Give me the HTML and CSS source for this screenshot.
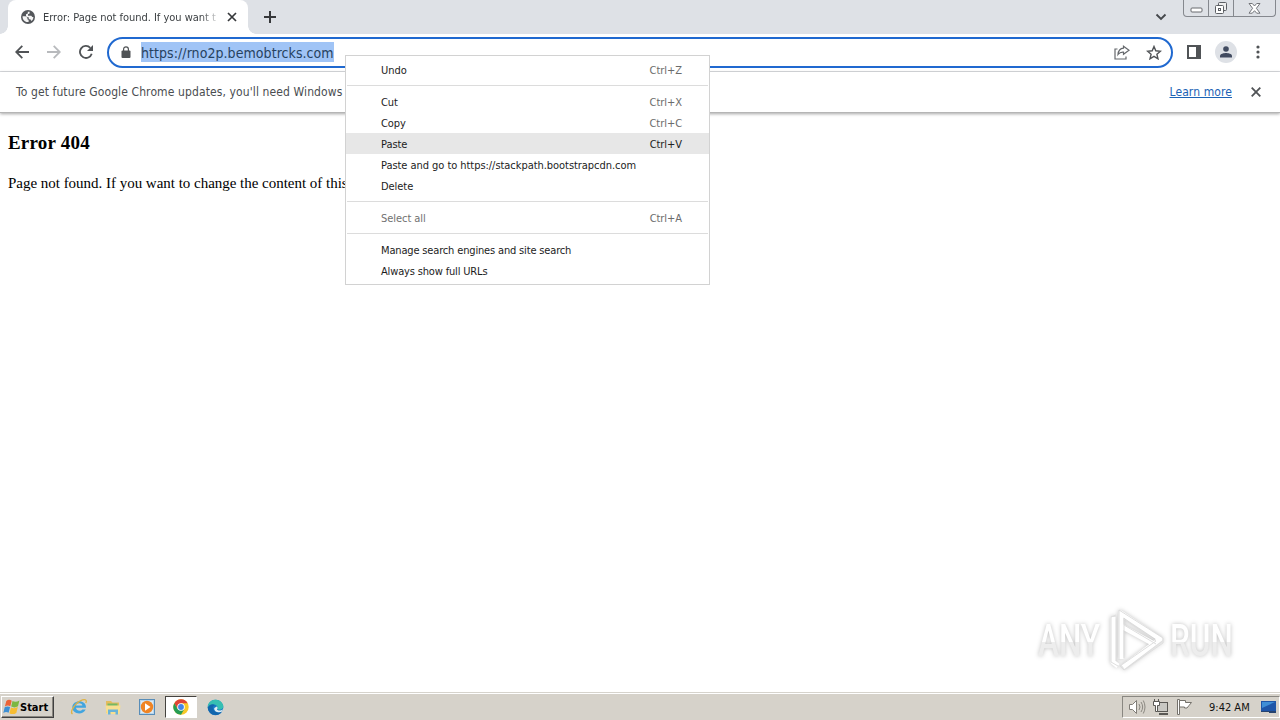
FILE: index.html
```
<!DOCTYPE html>
<html lang="en">
<head>
    <meta charset="UTF-8">
    <title>Error: Page not found. If you want to change the content of this page</title>
    <link rel="stylesheet" href="styles.css">
</head>
<body>
    <div class="desktop">
        <!-- tabs -->
        <div class="tabstrip">
            <div class="tab">
                <svg class="globe" width="14" height="14" viewBox="0 0 14 14"><circle cx="7" cy="7" r="7" fill="#54575b"/><path d="M1.600 6.200h3l1.800 1.600v1.500l1.200.8v1.800C4 12.600 1.400 9.700 1.600 6.200zM6.800 1.700h1.800v1.700L7 4.300v1.500h3.300l1 1.300h1.100c-.1 2-.8 3.100-2 4L9.300 9.200H7.800V7.600L5 6.500V4.300l1.800-.8z" fill="#f4f4f4"/></svg>
                <span class="tab-title">Error: Page not found. If you want t</span>
                <svg width="10" height="10" viewBox="0 0 10 10"><path d="M1 1l8 8M9 1L1 9" stroke="#36383b" stroke-width="1.700"/></svg>
            </div>
            <svg class="plus" width="12" height="12" viewBox="0 0 12 12"><path d="M6 0v12M0 6h12" stroke="#36383b" stroke-width="2"/></svg>
            <svg class="chevron" width="12" height="8" viewBox="0 0 12 8"><path d="M1.500 1.500L6 6l4.500-4.500" fill="none" stroke="#45484c" stroke-width="1.900"/></svg>
            <div class="win-btns">
                <span class="win-btn min"><svg width="13" height="6" viewBox="0 0 13 6"><rect x="1" y="1" width="11" height="4" rx="1" fill="#fff" stroke="#686a6f"/></svg></span>
                <span class="win-btn max"><svg width="14" height="13" viewBox="0 0 14 13"><rect x="4.500" y=".5" width="8" height="8" rx="1" fill="#eee" stroke="#5c5f64"/><rect x="1.500" y="3.500" width="8" height="8" rx="1" fill="#fff" stroke="#5c5f64"/><rect x="4.500" y="6.500" width="2" height="2" fill="none" stroke="#5c5f64"/></svg></span>
                <span class="win-btn close"><svg width="13" height="11" viewBox="0 0 13 11"><path d="M1 .5h3.300L6.500 3 8.700.5H12L8.400 5.300l3.600 4.900H8.700L6.500 7.700l-2.200 2.500H1l3.600-4.900z" fill="#fff" stroke="#73757a"/></svg></span>
            </div>
        </div>

        <!-- toolbar -->
        <div class="toolbar">
            <svg class="back" width="14" height="14" viewBox="0 0 14 14"><path d="M14 7H1.500M7.300.9L1.200 7l6.100 6.100" fill="none" stroke="#505356" stroke-width="1.800"/></svg>
            <svg class="forward" width="14" height="14" viewBox="0 0 14 14"><path d="M0 7h12.500M6.700.9L12.800 7l-6.100 6.100" fill="none" stroke="#b8babd" stroke-width="1.800"/></svg>
            <svg class="reload" width="14" height="14" viewBox="0 0 14 14"><path d="M12.700 8.700A6 6 0 1 1 11.300 2.800" fill="none" stroke="#505356" stroke-width="1.800"/><path d="M14 0v6H8z" fill="#505356"/></svg>
            <div class="omnibox">
                <svg class="lock" width="10" height="12" viewBox="0 0 10 12"><rect x=".5" y="4.500" width="9" height="7.500" rx="1" fill="#505356"/><path d="M2.600 5V3.200a2.400 2.400 0 0 1 4.800 0V5" fill="none" stroke="#505356" stroke-width="1.200"/></svg>
                <span class="url">https://rno2p.bemobtrcks.com</span>
                <svg class="share" width="16" height="15" viewBox="0 0 16 15"><path d="M3.500 4H1v10h11v-2.500" fill="none" stroke="#65686c" stroke-width="1.200"/><path d="M9.500 1.200L15 5.200 9.500 9.200V7.200C7 7 5.300 7.800 4 9.500c.3-3.600 2-6 5.500-6.300z" fill="none" stroke="#65686c" stroke-width="1.200"/></svg>
                <svg class="star" width="16" height="15" viewBox="0 0 16 15"><path d="M8 1.500l1.800 4.300 4.700.4-3.600 3.100 1.100 4.500L8 11.400l-4 2.400 1.100-4.500L1.500 6.200l4.700-.4z" fill="none" stroke="#505356" stroke-width="1.400"/></svg>
            </div>
            <svg class="panel" width="14" height="14" viewBox="0 0 14 14"><rect x="1" y="1" width="12" height="12" fill="#fff" stroke="#505356" stroke-width="2"/><path d="M9 1h4v12H9z" fill="#505356"/></svg>
            <span class="avatar"><svg width="14" height="14" viewBox="0 0 14 14"><circle cx="7" cy="4" r="2.800" fill="#414b60"/><path d="M1 12.500V11c0-2.200 4-3 6-3s6 .8 6 3v1.500z" fill="#414b60"/></svg></span>
            <svg class="dots" width="4" height="14" viewBox="0 0 4 14"><g fill="#505356"><circle cx="2" cy="2" r="1.600"/><circle cx="2" cy="7" r="1.600"/><circle cx="2" cy="12" r="1.600"/></g></svg>
        </div>

        <div class="infobar">
            <span class="info-text">To get future Google Chrome updates, you'll need Windows</span>
            <a href="#" class="learn">Learn more</a>
            <svg width="10" height="10" viewBox="0 0 10 10"><path d="M.7.7l8.600 8.600M9.300.7L.7 9.300" stroke="#505356" stroke-width="1.800"/></svg>
        </div>

        <div class="page">
            <h3>Error 404</h3>
            <p>Page not found. If you want to change the content of this</p>
        </div>

        <!-- taskbar -->
        <div class="taskbar">
            <div class="start">
                <svg width="17" height="16" viewBox="0 0 17 16"><path d="M3.300 2C5 .4 7 .5 8.700 1.700L7.300 7.300C5.500 6.200 3.700 6.400 1.900 7.500z" fill="#ec6336"/><path d="M9.500 2.100c2 1.100 4.300 1.100 6.900-.5L15 7.300c-2.400 1.500-4.700 1.400-6.800.3z" fill="#7cb742"/><path d="M1.700 8.300c1.800-1.100 3.500-1.200 5.400-.2l-1.500 5.700C3.900 12.700 2.200 12.800.3 13.900z" fill="#3d8fd3"/><path d="M8 8.500c2 1.100 4.300 1 6.800-.4l-1.500 5.800c-2.400 1.500-4.700 1.500-6.900.3z" fill="#f7bd32"/></svg>
                <b>Start</b>
            </div>
            <span class="app"><svg width="18" height="18" viewBox="0 0 18 18"><path d="M16 9.800H6c.2 3 4.800 4 6.400 1.600h3.300C12.800 17.800 2.300 16.300 2.300 9.300c0-8 14.200-8.600 13.700.5zM6 7.500h6.400C12 4.500 6.400 4.500 6 7.500z" fill="#42a5df"/><path d="M2.500 16C-.5 14 5 4.500 12.500 1.900c3.300-1.100 4.500.5 3.300 3.200" fill="none" stroke="#dfb243" stroke-width="1.300"/></svg></span>
            <span class="app"><svg width="18" height="18" viewBox="0 0 18 18"><path d="M2 3h5l1.500 1.500H15V15H2z" fill="#e4bc5d"/><path d="M3.500 5.500h10v3h-10z" fill="#75b865"/><path d="M1.500 7.500h15L15.500 16h-13z" fill="#f8df91"/><path d="M4 16.500v-5h10v5h-2.500V14h-5v2.500z" fill="#69b3d8"/></svg></span>
            <span class="app"><svg width="18" height="18" viewBox="0 0 18 18"><rect x="1.500" y="1.500" width="15" height="15" fill="#b7d5ec" stroke="#588db8"/><rect x="3" y="3" width="12" height="12" fill="#dcebf5"/><circle cx="9" cy="9" r="6.200" fill="#ef8424"/><path d="M7 5.300l5.500 3.700L7 12.700z" fill="#fff"/></svg></span>
            <span class="app active"><svg width="16" height="16" viewBox="0 0 16 16"><circle cx="8" cy="8" r="7.700" fill="#f7c828"/><path d="M1.330 4.150A7.700 7.700 0 0 1 14.670 4.150H8L4.670 9.930z" fill="#df4437"/><path d="M1.330 4.150A7.700 7.700 0 0 0 8 15.700L11.330 9.930H4.670z" fill="#259c54"/><circle cx="8" cy="8" r="3.800" fill="#fff"/><circle cx="8" cy="8" r="2.900" fill="#4285e8"/></svg></span>
            <span class="app"><svg width="17" height="17" viewBox="0 0 17 17"><circle cx="8.500" cy="8.500" r="7.800" fill="#1878c5"/><path d="M1 6.500C2.500-1.300 15-1 16.300 7c.4 3-3.300 4.700-6.300 3 1.500-1.500-.3-4.600-3.200-4.600C4 5.400 2 7 .8 9z" fill="#36bfb2"/><path d="M.8 8.500c1.500-3.200 5.200-4 7.300-2.300C5.500 6.600 5 9.400 6.800 11.500c2 2.300 5.600 2.400 8 1-2.800 5.600-13.700 4.500-14-4z" fill="#1266ad"/><path d="M9.800 7.500c2 2.100-.7 2.500.7 3.500 1.600 1 4 .6 5.500-.7l-1 2.300c-3.400 1.700-8.500-.1-7.700-3.700z" fill="#e2eff4"/></svg></span>

            <div class="tray">
                <svg width="18" height="18" viewBox="0 0 18 18"><path d="M1.500 6.500h3l4-4v13l-4-4h-3z" fill="#fff" stroke="#807d77"/><path d="M11 6q2 3 0 6M13 4q3.300 5 0 10M15.300 2.500q3.400 6.500 0 13" fill="none" stroke="#8b8881"/></svg>
                <svg width="18" height="18" viewBox="0 0 18 18"><rect x="5.500" y="4.500" width="10" height="9" fill="#c9c8c3" stroke="#5a5854"/><path d="M7 16h9" stroke="#5a5854" stroke-width="2"/><path d="M2.500 1v3M6.500 1v3M1.500 3.500h6v4h-2v6h-2v-6h-2z" fill="#fff" stroke="#5a5854"/></svg>
                <svg width="18" height="18" viewBox="0 0 18 18"><path d="M1.500 1.500h2v15h-2z" fill="#fff" stroke="#75726c"/><path d="M3.500 2.500h6v2h6L13 7.500l-2 2.500H8.500V9h-5z" fill="#fff" stroke="#75726c"/></svg>
                <span class="clock">9:42 AM</span>
                <svg class="desk" width="15" height="14" viewBox="0 0 15 14"><path d="M0 1h15v10H0z" fill="#1e55a8"/><path d="M1 2h13L1 8z" fill="#3f8ed6"/><path d="M0 11h15v2H8v-1H0z" fill="#26436e"/></svg>
            </div>
        </div>

        <div class="menu">
            <div class="item"><span>Undo</span><kbd>Ctrl+Z</kbd></div>
            <hr>
            <div class="item"><span>Cut</span><kbd>Ctrl+X</kbd></div>
            <div class="item"><span>Copy</span><kbd>Ctrl+C</kbd></div>
            <div class="item hover"><span>Paste</span><kbd>Ctrl+V</kbd></div>
            <div class="item"><span>Paste and go to https://stackpath.bootstrapcdn.com</span></div>
            <div class="item"><span>Delete</span></div>
            <hr>
            <div class="item disabled"><span>Select all</span><kbd>Ctrl+A</kbd></div>
            <hr>
            <div class="item tight"><span>Manage search engines and site search</span></div>
            <div class="item tight"><span>Always show full URLs</span></div>
        </div>

        <div class="watermark">
            <span>ANY</span>
            <svg width="60" height="66" viewBox="0 0 60 66"><g fill="none" stroke="#fff" stroke-width="5" stroke-linejoin="round"><path d="M7 10v45l5 4M15 52V6l39 26-37 28"/><path d="M15 19l33 18"/></g><g fill="none" stroke="#dedede" stroke-width="1" stroke-linejoin="round"><path d="M10 8l-5 2v45l7 4M13 53V3l44 28v5L18 63l-4-4 36-25-32-22v39"/><path d="M18 18l32 19"/></g></svg>
            <span>RUN</span>
        </div>
    </div>
</body>
</html>
```
FILE: styles.css
```
*{
    box-sizing: border-box;
    margin: 0;
    padding: 0;
}
body{
    overflow: hidden;
    background: #fff;
    font-family: "DejaVu Sans Condensed", "DejaVu Sans", sans-serif;
    font-size: 11px;
    color: #222;
}
svg{
    display: block;
    flex: none;
}
.desktop{
    position: relative;
    display: flex;
    flex-direction: column;
    width: 1280px;
    height: 720px;
    overflow: hidden;
}

/* tabs */
.tabstrip{
    display: flex;
    height: 34px;
    padding-left: 8px;
    background: #dee1e6;
}
.tab{
    position: relative;
    display: flex;
    align-items: center;
    width: 240px;
    padding-left: 13px;
    background: #fff;
    border-radius: 8px 8px 0 0;
}
.tab::before,.tab::after{
    content: "";
    position: absolute;
    bottom: 0;
    width: 8px;
    height: 8px;
}
.tab::before{
    left: -8px;
    background: radial-gradient(circle at 0 0, #dee1e6 7.5px, #fff 8px);
}
.tab::after{
    right: -8px;
    background: radial-gradient(circle at 100% 0, #dee1e6 7.5px, #fff 8px);
}
.tab-title{
    width: 176px;
    margin: 0 8px 0 8px;
    white-space: nowrap;
    letter-spacing: -.02px;
    color: #3c4043;
    -webkit-mask-image: linear-gradient(90deg, #000 158px, transparent 178px);
    mask-image: linear-gradient(90deg, #000 158px, transparent 178px);
}
.plus{
    margin: 11px 0 0 16px;
}
.chevron{
    margin: 13px 16px 0 auto;
}
.win-btns{
    display: flex;
    width: 93px;
    height: 17px;
    margin-right: 4px;
    border: 1px solid #85888e;
    border-top: 0;
    border-radius: 0 0 4px 4px;
}
.win-btn{
    display: flex;
    justify-content: center;
    align-items: center;
    width: 25px;
    border-right: 1px solid #85888e;
}
.win-btn.min{
    padding-top: 4px;
}
.win-btn.close{
    flex: 1;
    border: 0;
}

/* toolbar */
.toolbar{
    display: flex;
    align-items: center;
    height: 38px;
    padding: 0 20px 1px 15px;
    border-bottom: 1px solid #dadce0;
}
.forward{
    margin-left: 18px;
}
.reload{
    margin: 0 14px 0 18px;
}
.omnibox{
    display: flex;
    align-items: center;
    width: 1066px;
    height: 31px;
    padding: 0 9px 0 12px;
    border: 2px solid #2069d0;
    border-radius: 16px;
}
.url{
    height: 20px;
    margin-left: 10px;
    line-height: 22px;
    font-size: 14px;
    letter-spacing: .06px;
    color: #27425f;
    background: #a0c4f6;
}
.share{
    margin: 0 16px 0 auto;
}
.panel{
    margin-left: 14px;
}
.avatar{
    display: flex;
    justify-content: center;
    align-items: center;
    width: 22px;
    height: 22px;
    margin-left: 14px;
    border-radius: 50%;
    background: #dee1e6;
}
.dots{
    margin-left: auto;
}

.infobar{
    position: relative;
    display: flex;
    align-items: center;
    height: 41px;
    padding: 0 19px 1px 16px;
    border-bottom: 1px solid #b5b5b5;
    box-shadow: 0 1px 3px rgba(0,0,0,.35);
    font-size: 12px;
    color: #4a4d50;
}
.info-text{
    letter-spacing: .11px;
}
.learn{
    margin: 0 19px 0 auto;
    letter-spacing: .1px;
    color: #1b62b5;
}

.page{
    flex: 1;
    padding: 19px 8px;
    font-family: "Liberation Serif", serif;
    font-size: 15px;
    color: #000;
}
.page h3{
    font-size: 19px;
    line-height: 21px;
    letter-spacing: .2px;
}
.page p{
    margin-top: 21px;
    line-height: 18px;
    white-space: nowrap;
    letter-spacing: -.02px;
}

/* taskbar */
.taskbar{
    display: flex;
    align-items: center;
    height: 28px;
    padding: 1px 0 0 1px;
    border-top: 1px solid #d6d3cc;
    box-shadow: inset 0 1px #fff;
    background: #d6d2ca;
}
.start{
    display: flex;
    align-items: center;
    width: 53px;
    height: 22px;
    margin-right: 9px;
    padding-left: 1px;
    border: 1px solid;
    border-color: #fff #404040 #404040 #fff;
    box-shadow: inset -1px -1px #89867f;
    color: #000;
}
.app{
    display: flex;
    justify-content: center;
    align-items: center;
    width: 32px;
    height: 22px;
    margin-right: 2px;
}
.app.active{
    border: 1px solid;
    border-color: #45433f #fff #fff #45433f;
    background: #fff;
}
.tray{
    display: flex;
    align-items: center;
    width: 158px;
    height: 22px;
    margin-left: auto;
    padding-left: 5px;
    border: 1px solid;
    border-color: #898781 #fff #fff #898781;
}
.tray svg{
    margin-right: 6px;
}
.clock{
    width: 46px;
    margin: 0 6px 0 9px;
    white-space: nowrap;
    color: #111;
}
.tray .desk{
    margin: 0;
}

/* context menu */
.menu{
    position: absolute;
    left: 345px;
    top: 55px;
    width: 365px;
    height: 230px;
    padding-top: 3px;
    border: 1px solid #d2d2d2;
    background: #fff;
}
.item{
    display: flex;
    justify-content: space-between;
    height: 21px;
    padding: 0 27px 0 35px;
    line-height: 24px;
    white-space: nowrap;
    letter-spacing: -.05px;
    color: #1c1c1c;
}
.item.tight{
    letter-spacing: -.16px;
}
.item kbd{
    font-family: inherit;
    font-size: 11px;
    color: #6b6b6b;
}
.item.hover{
    background: #e7e7e7;
}
.item.hover kbd{
    color: #222;
}
.item.disabled{
    color: #717171;
}
.menu hr{
    height: 1px;
    margin: 5px 1px;
    border: 0;
    background: #dcdcdc;
}

.watermark{
    position: absolute;
    left: 1038px;
    top: 607px;
    display: flex;
    align-items: center;
    font-family: Roboto, sans-serif;
    font-size: 45px;
    font-weight: 500;
    color: #fff;
    filter: drop-shadow(0 0 2px rgba(0,0,0,.25));
}
.watermark span{
    width: 64px;
    background: linear-gradient(#fff 52%, #ededed 52%);
    -webkit-background-clip: text;
    background-clip: text;
    color: transparent;
    transform: scaleX(.7);
    transform-origin: 0 50%;
}
.watermark span:first-child{
    width: 90px;
    margin-right: -26px;
}
.watermark span:last-child{
    width: 92px;
}
.watermark svg{
    margin: 0 4px;
}
```
